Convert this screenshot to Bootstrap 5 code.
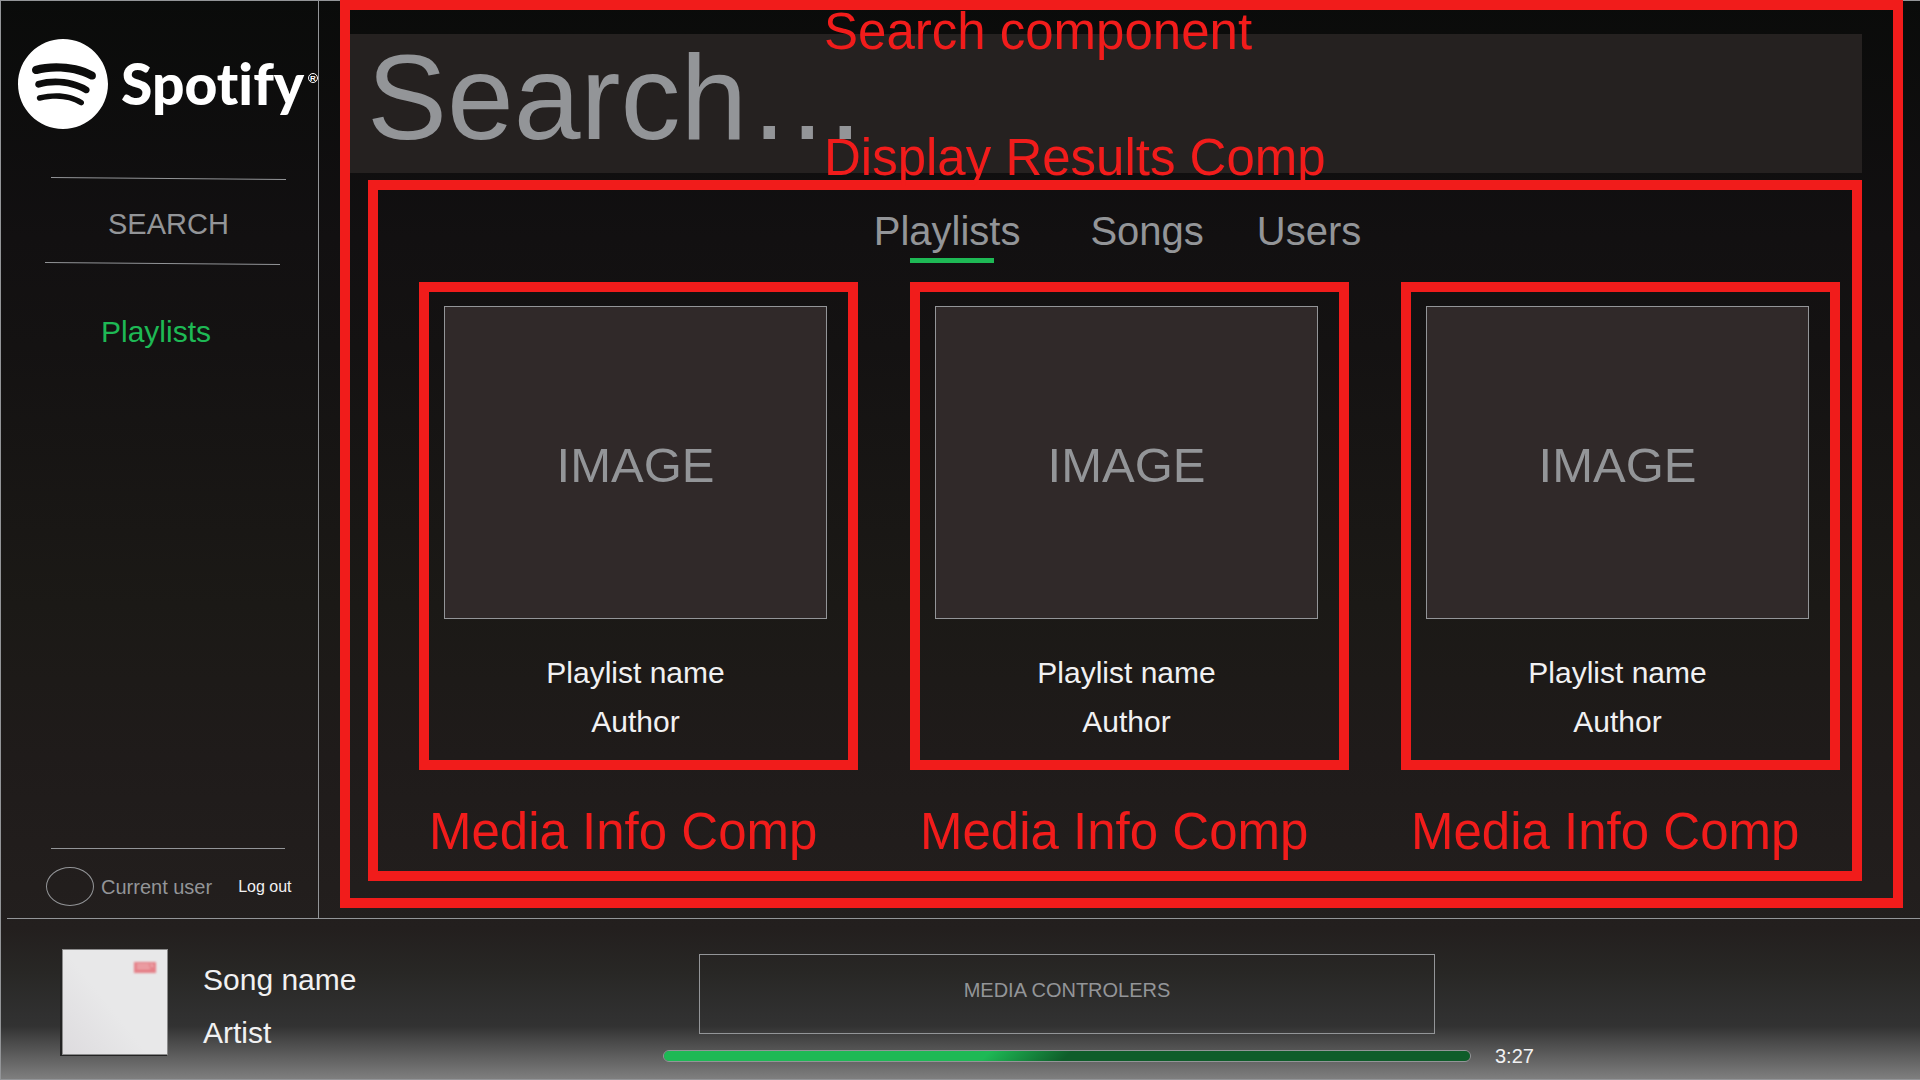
<!DOCTYPE html>
<html lang="en">
<head>
<meta charset="utf-8">
<meta name="viewport" content="width=device-width, initial-scale=1">
<title>Spotify search wireframe</title>
<link href="https://cdn.jsdelivr.net/npm/bootstrap@5.3.0/dist/css/bootstrap.min.css" rel="stylesheet">
<style>
  :root { --note: #f11c1b; --muted: #939598; --brand: #1eb955; --light: #f1f1f2; }
  body { font-family: "Liberation Sans", Arial, sans-serif; font-size: 30px; color: var(--light); }
  a, a:hover { text-decoration: none; }
  .app-shell {
    background: linear-gradient(#0a0b0a 0%, #121011 22%, #141212 32%, #1b1916 56%, #1f1b1a 70%, #231f1e 86%, #282725 90%, #303030 94%, #323232 95%, #424242 96%, #808080 100%);
    box-shadow: inset 1px 1px 0 var(--muted), inset 0 -1px 0 var(--muted);
  }
  .side-col { width: 319px; border-right: 1px solid var(--muted); padding: 39px 0 12px; }
  .side-logo { margin-left: 18px; }
  .side-logo text { font-variant-ligatures: none; }
  .side-rule { margin-left: 51px; }
  .side-rule-low { margin-left: 45px; }
  .side-link { line-height: 36px; }
  .side-search { color: var(--muted); font-size: 29px; padding: 26px 0 20px 108px; }
  .side-lists { color: var(--brand); padding: 49px 0 0 101px; }
  .user-area { margin-left: 46px; }
  .user-rule { width: 234px; margin: 0 0 18px 5px; border-top: 1px solid var(--muted); opacity: 1; }
  .user-pic { width: 48px; height: 39px; border: 1px solid var(--muted); border-radius: 50%; margin-right: 7px; }
  .user-name { font-size: 20px; color: var(--muted); margin-right: 26px; }
  .user-out { font-size: 16px; line-height: 24px; color: var(--light); }

  .note-frame { border: 10px solid var(--note); }
  .note-text { color: var(--note); font-size: 51px; line-height: 60px; }
  .note-over { position: absolute; left: 474px; z-index: 2; pointer-events: none; }
  .note-search { top: -8px; }
  .note-results { top: 118px; }
  .search-frame { margin: 0 17px 10px 21px; padding: 24px 31px 17px 0; }
  .search-box, .search-box:focus {
    height: 139px; padding: 0 0 14px 17px; border: 0; border-radius: 0; box-shadow: none;
    background: #252120; color: var(--muted); font-size: 120px; line-height: 125px;
  }
  .search-box::placeholder { color: var(--muted); opacity: 1; }
  .results-frame { margin: 7px 0 0 18px; padding: 17px 12px 9px 41px; }
  .result-tabs { margin: 0 24px 27px 0; }
  .result-tab { position: relative; padding: 0; border: 0; background: none; color: var(--muted); font-size: 40px; line-height: 48px; }
  .result-tab + .result-tab { margin-left: 53px; }
  .result-tab.active { margin-right: 17px; }
  .result-tab.active::after { content: ""; position: absolute; left: 36px; top: 51px; width: 84px; height: 5px; background: var(--brand); }
  .media-grid { gap: 52px; }
  .media-col { flex: 1 1 0; }
  .media-box { padding: 14px 21px 14px 15px; }
  .media-pic { aspect-ratio: 383 / 313; background: #302929; border: 1px solid var(--muted); color: var(--muted); font-size: 49px; line-height: 60px; padding-top: 4px; margin-bottom: 29px; }
  .media-line { line-height: 49px; }
  .media-note { padding: 32px 0 0 10px; }

  .player { margin-left: 7px; border-top: 1px solid var(--muted); min-height: 162px; }
  .player-left { flex: 603 1 0; padding: 30px 0 0 53px; }
  .player-mid { flex: 808 1 0; padding-top: 35px; }
  .player-right { flex: 425 1 0; padding-left: 24px; margin-bottom: 9px; font-size: 20px; line-height: 30px; }
  .song-text { margin: 4px 0 0 35px; line-height: 53px; }
  .controls-box { height: 80px; margin: 0 36px 16px; border: 1px solid var(--muted); color: var(--muted); font-size: 20px; padding-bottom: 8px; }
  .track-bar { height: 12px; border: 1px solid var(--muted); border-radius: 6px; background: none; }
  .track-fill { width: 100%; background: linear-gradient(135deg, var(--brand) 40%, #0f5d2a 50%); }
</style>
</head>
<body>
<div class="app-shell d-flex flex-column min-vh-100">
  <div class="d-flex flex-grow-1">

    <aside class="side-col d-flex flex-column flex-shrink-0">
      <a href="#" class="side-logo d-block lh-1" aria-label="Spotify">
        <svg class="d-block" width="300" height="90" viewBox="0 0 300 90" fill="#fff">
          <path transform="scale(3.75)" d="M12 0C5.4 0 0 5.4 0 12s5.4 12 12 12 12-5.4 12-12S18.66 0 12 0zm5.521 17.34c-.24.359-.66.48-1.021.24-2.82-1.74-6.36-2.101-10.561-1.141-.418.122-.779-.179-.899-.539-.12-.421.18-.78.54-.9 4.56-1.021 8.52-.6 11.64 1.32.42.18.479.659.301 1.02zm1.44-3.3c-.301.42-.841.6-1.262.3-3.239-1.98-8.159-2.58-11.939-1.38-.479.12-1.02-.12-1.14-.6-.12-.48.12-1.021.6-1.141C9.6 9.9 15 10.561 18.72 12.84c.361.181.54.78.241 1.2zm.12-3.36C15.24 8.4 8.82 8.16 5.16 9.301c-.6.179-1.2-.181-1.38-.721-.18-.601.18-1.2.72-1.381 4.26-1.26 11.28-1.02 15.721 1.621.539.3.719 1.02.419 1.56-.299.421-1.02.599-1.559.3z"/>
          <text x="103" y="66" font-family="Lato, sans-serif" font-weight="900" font-size="57">Spotify</text>
          <circle cx="295" cy="39" r="4.500" fill="none" stroke="#fff" stroke-width="1"/>
          <text x="295" y="42" text-anchor="middle" font-family="Liberation Sans, sans-serif" font-weight="700" font-size="8">R</text>
        </svg>
      </a>
      <nav class="d-flex flex-column mt-5">
        <svg class="side-rule" width="235" height="3" viewBox="0 0 235 3"><path d="M0 .5L235 2.5" stroke="#939598"/></svg>
        <a href="#" class="side-link side-search">SEARCH</a>
        <svg class="side-rule-low" width="235" height="3" viewBox="0 0 235 3"><path d="M0 .5L235 2.5" stroke="#939598"/></svg>
        <a href="#" class="side-link side-lists">Playlists</a>
      </nav>
      <div class="user-area mt-auto">
        <hr class="user-rule">
        <div class="d-flex align-items-center">
          <span class="user-pic"></span>
          <span class="user-name">Current user</span>
          <a href="#" class="user-out">Log out</a>
        </div>
      </div>
    </aside>

    <main class="search-frame note-frame position-relative flex-grow-1 d-flex flex-column">
      <span class="note-text note-over note-search">Search component</span>
      <input type="search" class="search-box form-control" placeholder="Search…" aria-label="Search">
      <span class="note-text note-over note-results">Display Results Comp</span>

      <section class="results-frame note-frame flex-grow-1">
        <div class="result-tabs d-flex justify-content-center" role="tablist">
          <button type="button" class="result-tab active" role="tab" aria-selected="true">Playlists</button>
          <button type="button" class="result-tab" role="tab" aria-selected="false">Songs</button>
          <button type="button" class="result-tab" role="tab" aria-selected="false">Users</button>
        </div>
        <div class="media-grid d-flex">
          <div class="media-col">
            <article class="media-box note-frame text-center">
              <div class="media-pic d-flex align-items-center justify-content-center">IMAGE</div>
              <div class="media-line">Playlist name</div>
              <div class="media-line">Author</div>
            </article>
            <div class="note-text media-note">Media Info Comp</div>
          </div>
          <div class="media-col">
            <article class="media-box note-frame text-center">
              <div class="media-pic d-flex align-items-center justify-content-center">IMAGE</div>
              <div class="media-line">Playlist name</div>
              <div class="media-line">Author</div>
            </article>
            <div class="note-text media-note">Media Info Comp</div>
          </div>
          <div class="media-col">
            <article class="media-box note-frame text-center">
              <div class="media-pic d-flex align-items-center justify-content-center">IMAGE</div>
              <div class="media-line">Playlist name</div>
              <div class="media-line">Author</div>
            </article>
            <div class="note-text media-note">Media Info Comp</div>
          </div>
        </div>
      </section>
    </main>
  </div>

  <footer class="player d-flex">
    <div class="player-left d-flex align-items-start">
      <svg class="flex-shrink-0" width="108" height="107" viewBox="0 0 108 107" role="img" aria-label="Album cover">
        <defs>
          <linearGradient id="sleeve" x1="0" y1="1" x2=".5" y2=".6"><stop offset="0" stop-color="#dddbde"/><stop offset="1" stop-color="#e8e8e9"/></linearGradient>
          <filter id="soft"><feGaussianBlur stdDeviation=".8"/></filter>
        </defs>
        <path d="M0 12L2 0H107V107H0z" fill="#232323"/>
        <rect x="2.500" y=".5" width="105" height="105" fill="url(#sleeve)" stroke="#8b8b8b"/>
        <g filter="url(#soft)"><rect x="74" y="13" width="22" height="11" fill="#e58088"/><path d="M77 16h12M77 19h13M91 15l2 3" stroke="#f0b4b8" stroke-width="1.500"/></g>
      </svg>
      <div class="song-text">
        <div>Song name</div>
        <div>Artist</div>
      </div>
    </div>
    <div class="player-mid">
      <div class="controls-box d-flex align-items-center justify-content-center">MEDIA CONTROLERS</div>
      <div class="track-bar progress" role="progressbar" aria-label="Track position" aria-valuenow="45" aria-valuemin="0" aria-valuemax="100">
        <div class="track-fill progress-bar"></div>
      </div>
    </div>
    <div class="player-right align-self-end">3:27</div>
  </footer>
</div>
<script src="https://cdn.jsdelivr.net/npm/bootstrap@5.3.0/dist/js/bootstrap.bundle.min.js"></script>
</body>
</html>
